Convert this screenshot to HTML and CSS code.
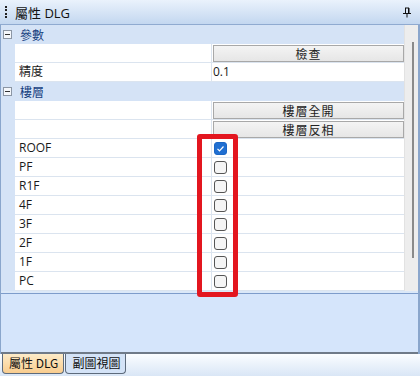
FILE: index.html
```html
<!DOCTYPE html>
<html lang="zh-Hant">
<head>
    <meta charset="UTF-8">
    <title>屬性 DLG</title>
    <link rel="stylesheet" href="styles.css">
</head>
<body>
    <div class="panel">
        <div class="titlebar">
            <span class="grip"></span>
            <span class="title">屬性 DLG</span>
            <svg class="pin" width="10" height="11" viewBox="0 0 10 11">
                <path d="M3 1h4M3.5 1v5M6.5 1v5" stroke="#111" stroke-width="1" fill="none"/>
                <rect x="6" y="1" width="1.5" height="5" fill="#111"/>
                <path d="M1 6.5h8M5 6.5v4" stroke="#111" stroke-width="1" fill="none"/>
            </svg>
        </div>

        <div class="body">
            <div class="grid">
                <div class="cat"><span class="minus"></span>參數</div>
                <div class="row"><div class="name"></div><div class="value"><button class="btn">檢查</button></div></div>
                <div class="row"><div class="name">精度</div><div class="value">0.1</div></div>
                <div class="cat"><span class="minus"></span>樓層</div>
                <div class="row"><div class="name"></div><div class="value"><button class="btn">樓層全開</button></div></div>
                <div class="row"><div class="name"></div><div class="value"><button class="btn">樓層反相</button></div></div>
                <div class="row"><div class="name">ROOF</div><div class="value"><span class="check on"></span></div></div>
                <div class="row"><div class="name">PF</div><div class="value"><span class="check"></span></div></div>
                <div class="row"><div class="name">R1F</div><div class="value"><span class="check"></span></div></div>
                <div class="row"><div class="name">4F</div><div class="value"><span class="check"></span></div></div>
                <div class="row"><div class="name">3F</div><div class="value"><span class="check"></span></div></div>
                <div class="row"><div class="name">2F</div><div class="value"><span class="check"></span></div></div>
                <div class="row"><div class="name">1F</div><div class="value"><span class="check"></span></div></div>
                <div class="row"><div class="name">PC</div><div class="value"><span class="check"></span></div></div>
            </div>
            <div class="scrollbar"><div class="thumb"></div></div>
            <div class="highlight"></div>
        </div>

        <div class="desc"><div class="desc-box"></div></div>

        <div class="tabs">
            <div class="tab active">屬性 DLG</div>
            <div class="tab">副圖視圖</div>
        </div>
    </div>
</body>
</html>
```

FILE: styles.css
```css
body {
    margin: 0;
    font-family: "Open Sans", "Noto Sans CJK TC", sans-serif;
    font-size: 12px;
    color: #1a1a1a;
    background: #fff;
}
.panel {
    width: 420px;
    height: 376px;
    display: flex;
    flex-direction: column;
    overflow: hidden;
}
.titlebar {
    height: 24px;
    border-bottom: 1px solid #8faad0;
    background: linear-gradient(#eaf2fc, #c3d7f0);
    display: flex;
    align-items: center;
    padding-left: 5px;
    padding-right: 8px;
}
.grip {
    width: 2px;
    height: 12px;
    border-left: 2px dotted #222;
    margin-right: 6px;
}
.title {
    font-size: 13px;
    color: #111;
    flex: 1;
}
.pin {
    margin-top: 1px;
}
.body {
    position: relative;
    display: flex;
    height: 266px;
    border-left: 1px solid #8aa6cc;
    border-right: 2px solid #8aa6cc;
}
.grid {
    flex: 1;
    background: #d5e3f6;
    display: flex;
    flex-direction: column;
}
.cat {
    height: 19px;
    display: flex;
    align-items: center;
    color: #15407e;
    font-family: "Noto Sans CJK TC", sans-serif;
}
.minus {
    width: 7px;
    height: 7px;
    border: 1px solid #8c96a4;
    background: #f4f7fb;
    margin: 0 8px 0 2px;
    position: relative;
}
.minus::after {
    content: "";
    position: absolute;
    left: 1px;
    top: 3px;
    width: 5px;
    height: 1px;
    background: #333;
}
.row {
    height: 18px;
    margin-left: 14px;
    border-bottom: 1px solid #dbe4ef;
    background: #fff;
    display: grid;
    grid-template-columns: 197px 1fr;
}
.name {
    padding-left: 4px;
    line-height: 18px;
    border-right: 1px solid #dbe4ef;
}
.value {
    padding-left: 1px;
    line-height: 18px;
    display: flex;
    align-items: center;
}
.btn {
    width: 100%;
    height: 17px;
    margin-top: 1px;
    padding: 0;
    border: 1px solid #a8a8a8;
    background: linear-gradient(#f4f4f4, #e6e6e6);
    font-family: "Noto Sans CJK TC", sans-serif;
    font-size: 12px;
    letter-spacing: 1px;
    color: #222;
    line-height: 14px;
}
.check {
    width: 11px;
    height: 11px;
    margin-left: 1px;
    border: 1px solid #555;
    border-radius: 3px;
    background: #f5f5f5;
}
.check.on {
    border-color: #1b66c4;
    background: #1f6fd2 url("data:image/svg+xml,%3Csvg xmlns='http://www.w3.org/2000/svg' width='11' height='11'%3E%3Cpath d='M2.5 5.8l2 2 4-4.3' stroke='white' stroke-width='1.2' fill='none'/%3E%3C/svg%3E") no-repeat center;
}
.scrollbar {
    width: 13px;
    background: #ededed;
    border-left: 1px solid #e2e2e2;
    display: flex;
    justify-content: center;
}
.thumb {
    width: 2px;
    height: 216px;
    margin-top: 17px;
    margin-left: 2px;
    background: #8a8a8a;
}
.highlight {
    position: absolute;
    left: 196px;
    top: 109px;
    width: 31px;
    height: 153px;
    border: 5px solid #e3161f;
    border-radius: 3px;
}
.desc {
    height: 61px;
    padding-top: 2px;
    background: #dbe8f8;
    border-left: 1px solid #8aa6cc;
    border-right: 2px solid #8aa6cc;
    display: flex;
    flex-direction: column;
}
.desc-box {
    flex: 1;
    border-top: 1px solid #7d9ccb;
    border-bottom: 2px solid #6f7a88;
    background: #d5e5fb;
}
.tabs {
    flex: 1;
    background: linear-gradient(#fbfdff, #d9e6f6);
    display: flex;
    align-items: flex-start;
    padding-left: 2px;
    gap: 1px;
}
.tab {
    height: 19px;
    line-height: 18px;
    padding: 0 5px 0 6px;
    border: 1px solid #5d6b7c;
    border-top: none;
    border-radius: 0 0 4px 4px;
    background: #d4e3f7;
    color: #111;
    font-family: "Noto Sans CJK TC", sans-serif;
}
.tab.active {
    background: linear-gradient(#fdebc8, #f9cd8f);
}
```
